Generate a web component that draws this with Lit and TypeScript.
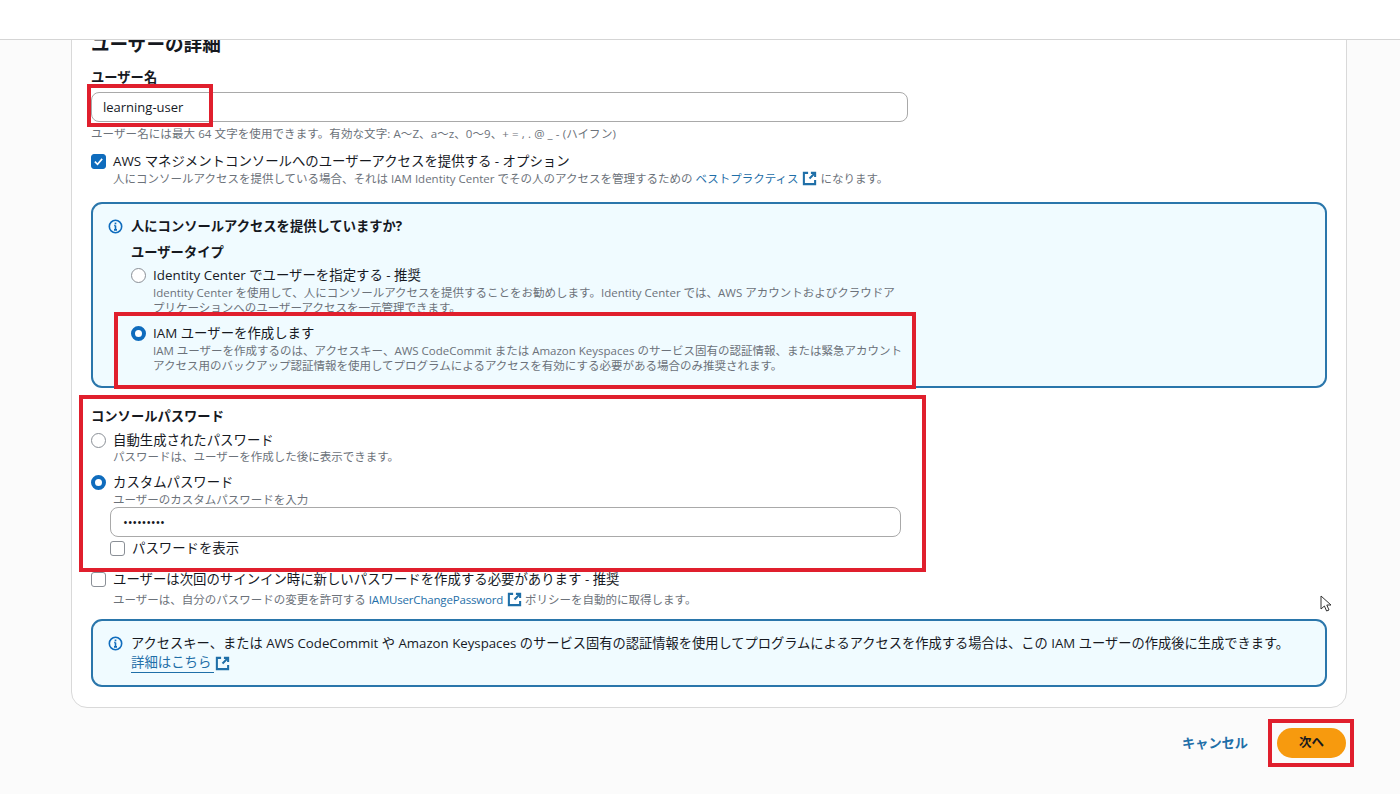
import { LitElement, html, css } from "lit";
import { customElement } from "lit/decorators.js";

const ext = html`<svg class="ext" viewBox="0 0 16 16" fill="none" stroke="currentColor" stroke-width="2.2"><path d="M6.5 2H2v12h12V9.5"/><path d="M9.5 2H14v4.5"/><path d="M14 2 8 8"/></svg>`;
const info = html`<svg class="info" viewBox="0 0 16 16" fill="none" stroke="#0f6cbd" stroke-width="1.7"><circle cx="8" cy="8" r="6.6"/><path d="M8 7v4.6M6.4 11.6h3.2M6.6 7H8"/><path d="M8 3.8v1.8" stroke-width="1.8"/></svg>`;
const check = html`<svg viewBox="0 0 16 16" fill="none" stroke="#fff" stroke-width="2"><path d="M3.5 8.2 6.8 11.5 12.5 4.8"/></svg>`;

@customElement("app-root")
export class AppRoot extends LitElement {
  static styles = css`
    :host { display: block; position: relative; width: 1400px; height: 794px; overflow: hidden; background: #fbfbfb;
      font-family: "Open Sans", "Noto Sans CJK JP", sans-serif; font-size: 13.4px; line-height: 18px; color: #16191f; }
    * { box-sizing: border-box; }
    .top { height: 40px; background: #fff; border-bottom: 1px solid #d5d5d5; position: relative; z-index: 1; }
    .card { width: 1276px; height: 688px; margin: -20px 0 0 71px; padding: 11px 19px 0; background: #fff;
      border: 1px solid #d9d9d9; border-radius: 16px; }
    h2 { margin: 0 0 12px; font-size: 18.6px; line-height: 24px; font-weight: 700; }
    .lbl { font-weight: 700; font-size: 13.3px; line-height: 18px; }
    .input { height: 30px; border: 1px solid #a9a9a9; border-radius: 8px; background: #fff; display: flex; align-items: center;
      padding-left: 11px; font-size: 13px; }
    .name { width: 817px; margin-top: 6px; }
    .desc { font-size: 11.5px; line-height: 15px; color: #6c727a; }
    .help { margin-top: 4px; letter-spacing: 0.09px; }
    .row { display: flex; gap: 7px; }
    .body { display: flex; flex-direction: column; }
    .gap1 { gap: 1px; }
    .gap4 { gap: 4px; }
    .box { flex: none; width: 15px; height: 15px; margin-top: 2px; border: 1px solid #8a8f96; border-radius: 3px; background: #fff; }
    .box.on { background: #0f6cbd; border-color: #0f6cbd; }
    .box svg { display: block; width: 13px; height: 13px; }
    .radio { flex: none; width: 15px; height: 15px; margin-top: 2px; border: 1px solid #8a8f96; border-radius: 50%; background: #fff; }
    .radio.on { border: 4px solid #0f6cbd; }
    .console { margin-top: 11px; }
    .alert { width: 1236px; border: 2px solid #2a76ab; border-radius: 11px; background: #f0fbff; display: flex; gap: 8px; }
    .a1 { height: 186px; margin-top: 16px; padding: 13px 15px; }
    .a2 { height: 68px; margin-top: 12px; padding: 13px 15px; font-size: 13.25px; line-height: 19px; }
    .info { flex: none; width: 15px; height: 15px; margin-top: 2px; }
    .a-body { flex: 1; min-width: 0; }
    .title { font-weight: 700; font-size: 13.3px; }
    .type { margin-top: 8px; }
    .opt { margin-top: 5px; }
    .opt2 { margin-top: 9px; }
    .wide { width: 750px; }
    a { color: #1f6fa8; text-decoration: none; }
    .ext { width: 15px; height: 15px; vertical-align: -3px; margin: 0 3px 0 1px; color: #1f6fa8; }
    .tight { letter-spacing: -0.18px; }
    .ul { border-bottom: 1px solid #1f6fa8; padding-right: 3px; font-size: 13.4px; }
    .more { display: flex; align-items: center; }
    .more .ext { margin: 0 0 0 1px; }
    .pw-head { margin-top: 19px; }
    .pw-opt { margin-top: 6px; }
    .pw-opt2 { margin-top: 9px; }
    .sub { margin-left: 19px; width: 791px; }
    .sub .input { width: 791px; padding-left: 12px; letter-spacing: -0.25px; }
    .show { margin-top: 2px; }
    .must { margin-top: 13px; }
    .footer { display: flex; justify-content: flex-end; align-items: center; height: 30px; margin-top: 20px; padding-right: 54px; gap: 29px; }
    .cancel { color: #1f6fa8; font-weight: 700; font-size: 13.2px; }
    .next { width: 69px; height: 30px; border-radius: 15px; background: #f79a0e; font-weight: 700; font-size: 12.5px; display: flex; align-items: center; justify-content: center; }
    .mark { position: absolute; border: 4px solid #e01f2d; z-index: 2; }
    .m1 { left: 87px; top: 84px; width: 126px; height: 43px; }
    .m2 { left: 114px; top: 312px; width: 802px; height: 77px; }
    .m3 { left: 79px; top: 395px; width: 847px; height: 177px; }
    .m4 { left: 1268px; top: 719px; width: 86px; height: 48px; }
    .cursor { position: absolute; left: 1320px; top: 595px; width: 14px; height: 18px; z-index: 2; }
  `;

  render() {
    return html`
      <div class="top"></div>
      <div class="card">
        <h2>ユーザーの詳細</h2>
        <div class="lbl">ユーザー名</div>
        <div class="input name">learning-user</div>
        <div class="desc help">ユーザー名には最大 64 文字を使用できます。有効な文字: A〜Z、a〜z、0〜9、+ = , . @ _ - (ハイフン)</div>
        <div class="row console">
          <div class="box on">${check}</div>
          <div class="body gap1">
            <div>AWS マネジメントコンソールへのユーザーアクセスを提供する - オプション</div>
            <div class="desc">人にコンソールアクセスを提供している場合、それは IAM Identity Center でその人のアクセスを管理するための <a href="#">ベストプラクティス</a> ${ext}になります。</div>
          </div>
        </div>
        <div class="alert a1">
          ${info}
          <div class="a-body">
            <div class="title">人にコンソールアクセスを提供していますか?</div>
            <div class="lbl type">ユーザータイプ</div>
            <div class="row opt">
              <div class="radio"></div>
              <div class="body gap1 wide">
                <div>Identity Center でユーザーを指定する - 推奨</div>
                <div class="desc">Identity Center を使用して、人にコンソールアクセスを提供することをお勧めします。Identity Center では、AWS アカウントおよびクラウドアプリケーションへのユーザーアクセスを一元管理できます。</div>
              </div>
            </div>
            <div class="row opt2">
              <div class="radio on"></div>
              <div class="body gap1 wide">
                <div>IAM ユーザーを作成します</div>
                <div class="desc">IAM ユーザーを作成するのは、アクセスキー、AWS CodeCommit または Amazon Keyspaces のサービス固有の認証情報、または緊急アカウントアクセス用のバックアップ認証情報を使用してプログラムによるアクセスを有効にする必要がある場合のみ推奨されます。</div>
              </div>
            </div>
          </div>
        </div>
        <div class="lbl pw-head">コンソールパスワード</div>
        <div class="row pw-opt">
          <div class="radio"></div>
          <div class="body">
            <div>自動生成されたパスワード</div>
            <div class="desc">パスワードは、ユーザーを作成した後に表示できます。</div>
          </div>
        </div>
        <div class="row pw-opt2">
          <div class="radio on"></div>
          <div class="body gap1">
            <div>カスタムパスワード</div>
            <div class="desc">ユーザーのカスタムパスワードを入力</div>
          </div>
        </div>
        <div class="sub">
          <div class="input">•••••••••</div>
          <div class="row show">
            <div class="box"></div>
            <div>パスワードを表示</div>
          </div>
        </div>
        <div class="row must">
          <div class="box"></div>
          <div class="body gap4">
            <div>ユーザーは次回のサインイン時に新しいパスワードを作成する必要があります - 推奨</div>
            <div class="desc">ユーザーは、自分のパスワードの変更を許可する <a class="tight" href="#">IAMUserChangePassword</a> ${ext}ポリシーを自動的に取得します。</div>
          </div>
        </div>
        <div class="alert a2">
          ${info}
          <div class="a-body">
            <div>アクセスキー、または AWS CodeCommit や Amazon Keyspaces のサービス固有の認証情報を使用してプログラムによるアクセスを作成する場合は、この IAM ユーザーの作成後に生成できます。</div>
            <div class="more"><a class="ul" href="#">詳細はこちら</a>${ext}</div>
          </div>
        </div>
      </div>
      <div class="footer">
        <a class="cancel" href="#">キャンセル</a>
        <div class="next">次へ</div>
      </div>
      <div class="mark m1"></div>
      <div class="mark m2"></div>
      <div class="mark m3"></div>
      <div class="mark m4"></div>
      <svg class="cursor" viewBox="0 0 14 18" fill="#fff" stroke="#333" stroke-width="1"><path d="M1 1v13l3.4-3 2.2 5 2.4-1-2.2-5H11z"/></svg>
    `;
  }
}
